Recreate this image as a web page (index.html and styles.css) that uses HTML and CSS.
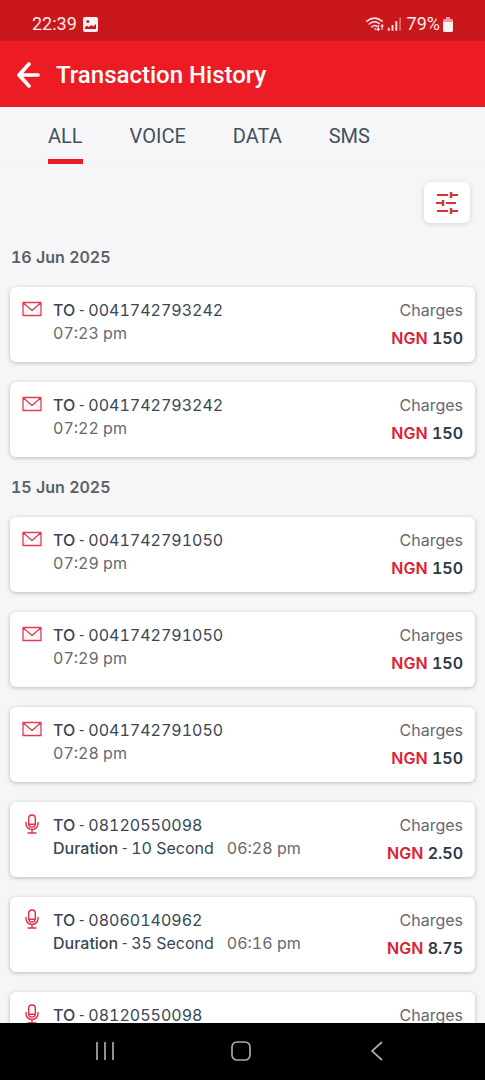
FILE: index.html
```html
<!DOCTYPE html>
<html lang="en">
<head>
<meta charset="utf-8">
<meta name="viewport" content="width=device-width, initial-scale=1">
<title>Transaction History</title>
<link rel="stylesheet" href="styles.css">
</head>
<body>
<svg class="symbols" aria-hidden="true">
  <symbol id="mail" viewBox="0 0 20 16"><path d="M1 14.500l6-7.500M19 14.500l-6-7.500" fill="none" stroke="#f8c5cb" stroke-width=".8"/><path d="M1 1.500h18v13H1zM1.500 2l8.500 7.500L18.500 2" fill="none" stroke="#df3c50" stroke-width="1.300" stroke-linejoin="round"/></symbol>
  <symbol id="mic" viewBox="0 0 14 20"><g fill="none" stroke="#e1303f" stroke-width="1.400" stroke-linecap="round"><rect x="3.700" y="1" width="6.600" height="12" rx="3.300"/><path d="M1 8.500v1.500a6 5.500 0 0 0 12 0V8.500M4 10.300h6M7 15.500V19M3 19h8"/></g></symbol>
</svg>
<div class="status">
  <div class="status-group"><span>22:39</span>
    <svg width="15" height="15" viewBox="0 0 15 15"><path fill="#fff0f0" fill-rule="evenodd" d="M2 0h11a2 2 0 0 1 2 2v11a2 2 0 0 1-2 2H2a2 2 0 0 1-2-2V2a2 2 0 0 1 2-2zM2 12h11V7L10 9.500 8.500 8 5.500 10 4 8.500 2 10.500zM3.300 4.500a1.500 1.500 0 1 0 3 0 1.500 1.500 0 1 0-3 0z"/></svg>
  </div>
  <div class="status-group status-right">
    <svg width="36" height="16" viewBox="0 0 38 16"><g fill="none" stroke="#ffe3e3" stroke-width="1.700" stroke-linecap="round"><path d="M1 5Q9-1.500 17 5M3.500 8Q9 3.500 14 7.500M6 11q3-2.500 5.500-.5"/></g><path d="M9 12.500l2 2M13 9v5.500M11.500 13l1.500 1.800 1.500-1.800M17 14V9M15.500 10.500L17 8.800l1.500 1.700" fill="none" stroke="#ffe3e3" stroke-width="1.200"/><g fill="#ffe3e3"><path d="M23 12h2v3h-2zM27 9h2v6h-2zM31 5h2v10h-2z"/><path opacity=".4" d="M35 1h2v14h-2z"/></g></svg>
    <span class="battery">79%</span>
    <svg width="10" height="15" viewBox="0 0 10 15"><path d="M3 0h4v2h2l1 1v4H0V3l1-1h2z" fill="#ef9b9d"/><path d="M0 5h10v9l-1 1H1l-1-1z" fill="#fff0f0"/></svg>
  </div>
</div>
<header class="appbar">
  <button class="back" aria-label="Back"><svg width="24" height="26" viewBox="0 0 24 26"><path d="M13 2L3 13l10 11M3 13h19" fill="none" stroke="#fff" stroke-width="3.700" stroke-linecap="round" stroke-linejoin="round"/></svg></button>
  <h1>Transaction History</h1>
</header>
<nav class="tabs">
  <a href="#all" class="tab active">ALL</a><a href="#voice" class="tab">VOICE</a><a href="#data" class="tab">DATA</a><a href="#sms" class="tab">SMS</a>
</nav>
<main class="history">
  <button class="filter" aria-label="Filter"><svg width="24" height="24" viewBox="0 0 24 24"><path d="M2 4h11M16 4h7M1 12h6M11 12h10M2 20h11M16 20h7" stroke="#d6333a" stroke-width="2"/><path d="M16 1v6M8 9v6M16 17v6" stroke="#d6333a" stroke-width="2.500"/></svg></button>
  <h2>16 Jun 2025</h2>
  <article class="card"><svg class="icon mail"><use href="#mail"/></svg><div class="details"><p class="to"><b>TO</b> <i>-</i> 0041742793242</p><p>07:23 pm</p></div><div class="charge"><p>Charges</p><p class="amount"><span>NGN</span> 150</p></div></article>
  <article class="card"><svg class="icon mail"><use href="#mail"/></svg><div class="details"><p class="to"><b>TO</b> <i>-</i> 0041742793242</p><p>07:22 pm</p></div><div class="charge"><p>Charges</p><p class="amount"><span>NGN</span> 150</p></div></article>
  <h2>15 Jun 2025</h2>
  <article class="card"><svg class="icon mail"><use href="#mail"/></svg><div class="details"><p class="to"><b>TO</b> <i>-</i> 0041742791050</p><p>07:29 pm</p></div><div class="charge"><p>Charges</p><p class="amount"><span>NGN</span> 150</p></div></article>
  <article class="card"><svg class="icon mail"><use href="#mail"/></svg><div class="details"><p class="to"><b>TO</b> <i>-</i> 0041742791050</p><p>07:29 pm</p></div><div class="charge"><p>Charges</p><p class="amount"><span>NGN</span> 150</p></div></article>
  <article class="card"><svg class="icon mail"><use href="#mail"/></svg><div class="details"><p class="to"><b>TO</b> <i>-</i> 0041742791050</p><p>07:28 pm</p></div><div class="charge"><p>Charges</p><p class="amount"><span>NGN</span> 150</p></div></article>
  <article class="card"><svg class="icon mic"><use href="#mic"/></svg><div class="details"><p class="to"><b>TO</b> <i>-</i> 08120550098</p><p class="call"><span class="to"><b>Duration</b> <i>-</i> 10 Second</span><span>06:28 pm</span></p></div><div class="charge"><p>Charges</p><p class="amount"><span>NGN</span> 2.50</p></div></article>
  <article class="card"><svg class="icon mic"><use href="#mic"/></svg><div class="details"><p class="to"><b>TO</b> <i>-</i> 08060140962</p><p class="call"><span class="to"><b>Duration</b> <i>-</i> 35 Second</span><span>06:16 pm</span></p></div><div class="charge"><p>Charges</p><p class="amount"><span>NGN</span> 8.75</p></div></article>
  <article class="card"><svg class="icon mic"><use href="#mic"/></svg><div class="details"><p class="to"><b>TO</b> <i>-</i> 08120550098</p></div><div class="charge"><p>Charges</p></div></article>
</main>
<footer class="system-nav">
  <button aria-label="Recent apps"><svg width="20" height="20" viewBox="0 0 20 20"><path d="M2 1v18M10 1v18M18 1v18" stroke="#aaa" stroke-width="1.700"/></svg></button>
  <button aria-label="Home"><svg width="20" height="20" viewBox="0 0 20 20"><rect x="1" y="1" width="18" height="18" rx="5" fill="none" stroke="#aaa" stroke-width="1.700"/></svg></button>
  <button aria-label="System back"><svg width="20" height="20" viewBox="0 0 20 20"><path d="M15 1L5 10l10 9" fill="none" stroke="#aaa" stroke-width="1.700"/></svg></button>
</footer>
</body>
</html>
```
FILE: styles.css
```css
* { box-sizing: border-box; }
body { margin: 0; height: 100vh; display: flex; flex-direction: column; background: #f6f6f9; color: #66696e; font: 16px/22px Inter, sans-serif; font-variant-numeric: tabular-nums; }
h1, h2, p { margin: 0; }
b { font-weight: 500; }
i { font-family: Roboto, sans-serif; font-style: normal; }
button { display: flex; align-items: center; justify-content: center; padding: 0; border: 0; background: none; }
svg { display: block; flex: none; }
.symbols { position: absolute; width: 0; height: 0; }
.status { flex: none; display: flex; justify-content: space-between; padding: 12px 32px 5px; background: #c9171b; color: #ffe9e9; font: 18px/24px Roboto, sans-serif; }
.status-group { display: flex; align-items: center; gap: 6px; }
.status-right { gap: 3px; }
.battery { padding-left: 2px; }
.appbar { flex: none; display: flex; align-items: center; gap: 16px; height: 66px; padding: 2px 16px 0; background: #ed1c24; color: #fff; }
.appbar h1 { font: 500 24px/30px Roboto, sans-serif; }
.tabs { flex: none; display: flex; gap: 47px; padding: 0 48px; border-bottom: 1px solid #f2f2f4; }
.tab { padding: 17px 0 11px; border-bottom: 5px solid transparent; color: #43505f; font: 20px/24px Roboto, sans-serif; text-decoration: none; }
.active { border-color: #ed1c24; }
.history { flex: 1; min-height: 0; display: flex; flex-direction: column; gap: 20px; padding: 17px 10px 0; overflow-y: auto; scrollbar-width: none; }
.filter { flex: none; align-self: flex-end; width: 46px; height: 41px; margin: 0 5px 4px 0; border-radius: 6px; background: #fff; box-shadow: 0 1px 5px #00000026; }
.history h2 { font-size: 16px; line-height: 20px; font-weight: 600; color: #5d5f64; padding-left: 1px; }
.card { flex: none; display: flex; align-items: flex-start; min-height: 75px; padding: 12px; border-radius: 6px; background: #fff; box-shadow: 0 1px 4px #00000040; }
.icon { margin-right: 11px; }
.mail { width: 20px; height: 16px; margin-top: 2px; }
.mic { width: 14px; height: 20px; margin-left: 3px; margin-right: 14px; }
.details { flex: 1; }
.to { color: #3a4654; }
.call { display: flex; gap: 13px; }
.charge { display: grid; gap: 6px; text-align: right; }
.amount { font-weight: 600; color: #2c3947; }
.amount span { color: #dc2030; }
.system-nav { flex: none; display: flex; justify-content: space-between; height: 57px; padding: 0 98px 2px 95px; background: #000; }
```
